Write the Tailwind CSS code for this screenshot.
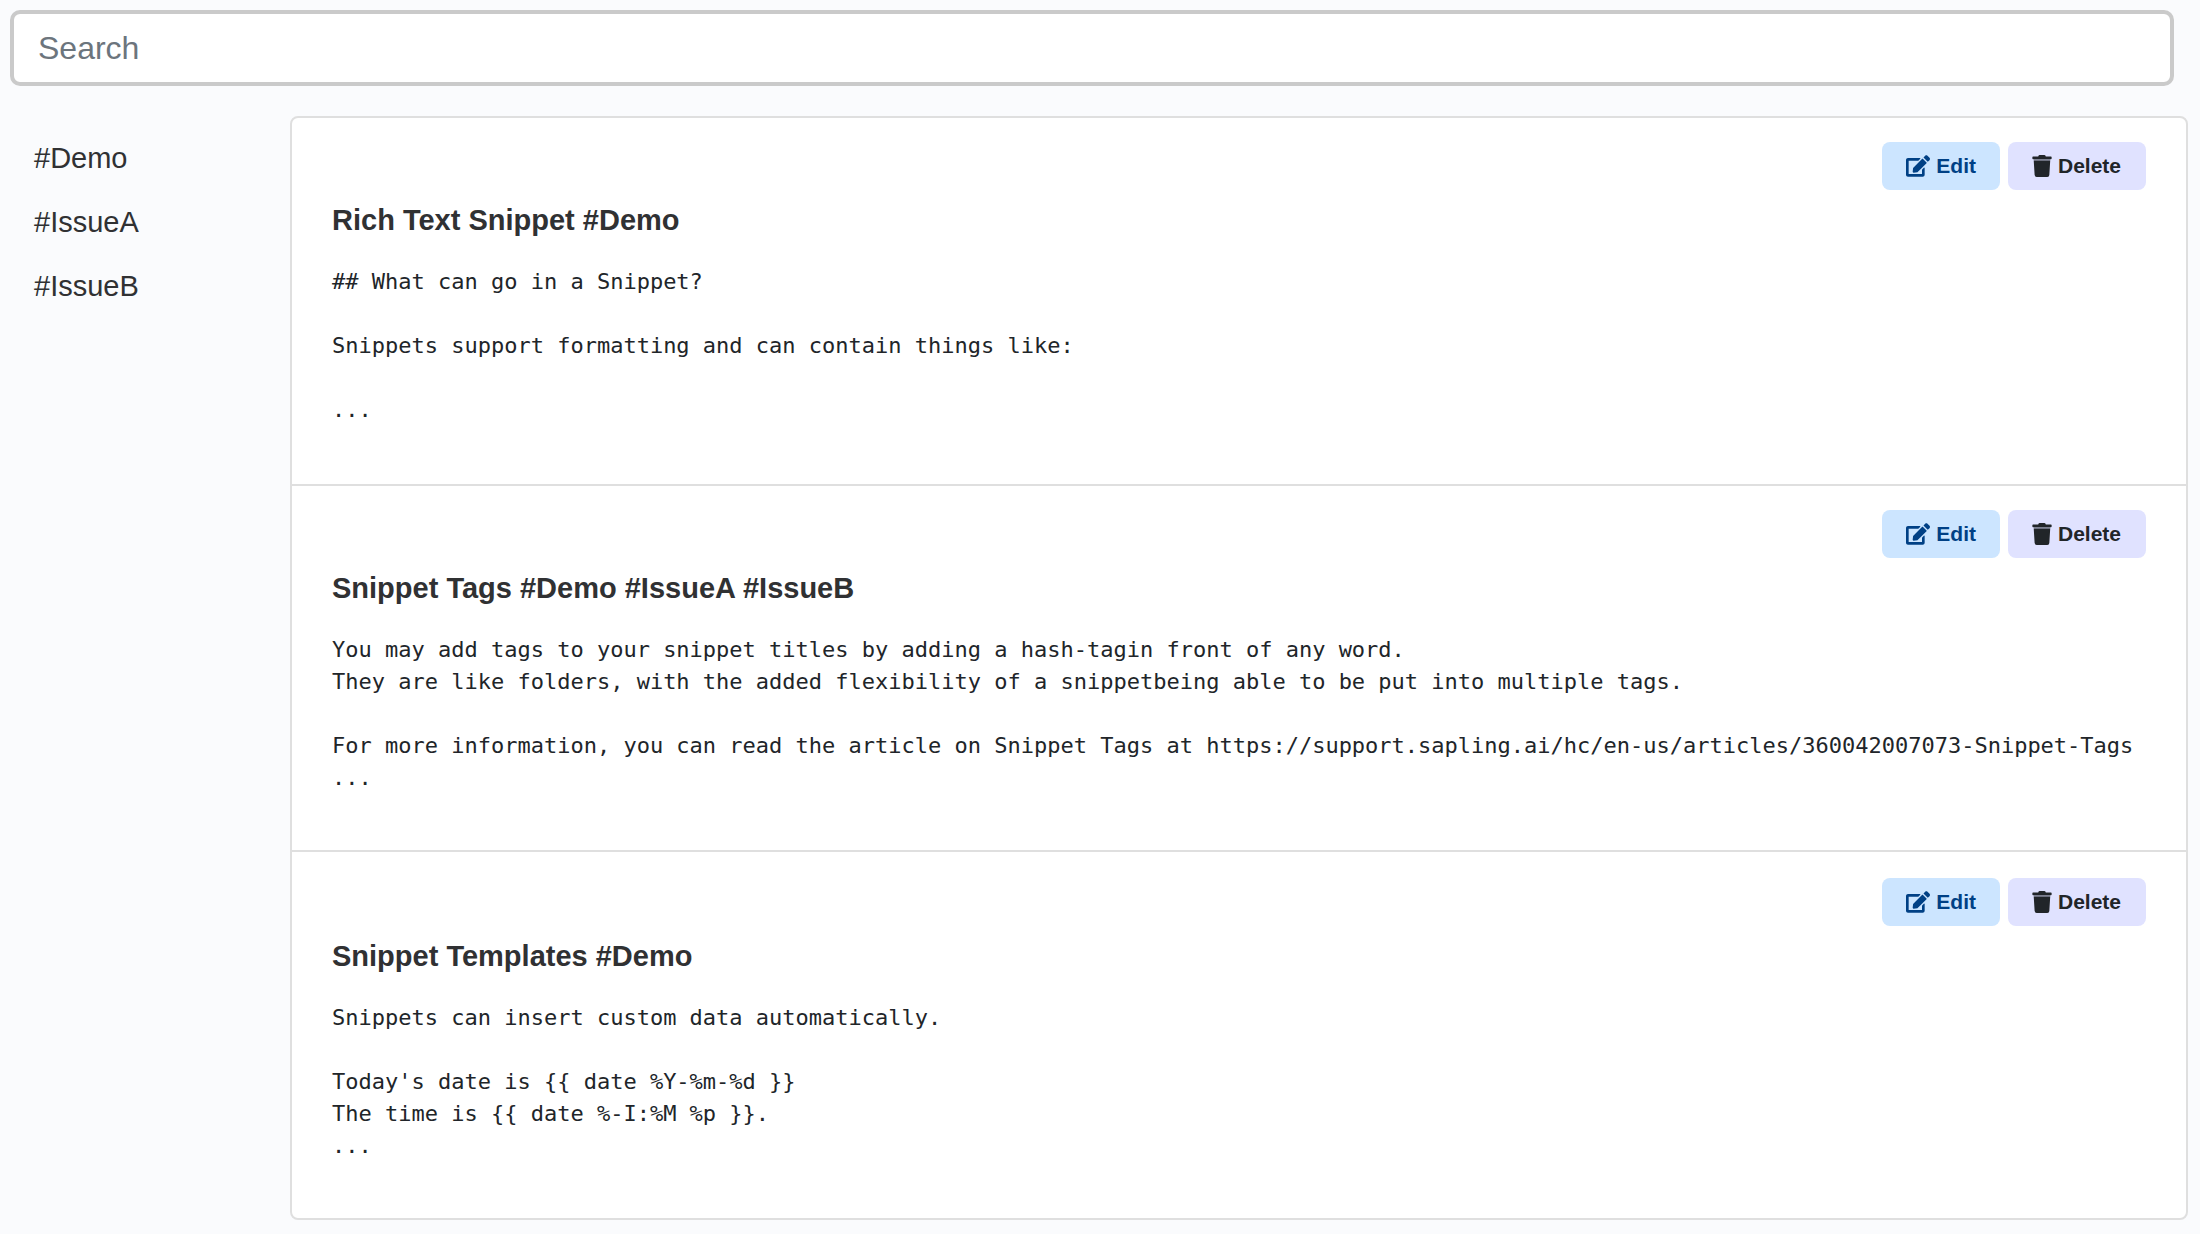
<!DOCTYPE html>
<html lang="en">
<head>
<meta charset="utf-8">
<title>Snippets</title>
<script src="https://cdn.jsdelivr.net/npm/@tailwindcss/browser@4"></script>
</head>
<body class="min-h-screen bg-[#fafbfd] pt-[10px] pl-[10px] font-['Liberation_Sans',Arial,sans-serif] text-[#212529]">
<svg class="hidden" aria-hidden="true">
  <symbol id="icon-edit" viewBox="0 0 576 512"><path d="M402.6 83.2l90.2 90.2c3.8 3.8 3.8 10 0 13.8L274.4 405.6l-92.8 10.3c-12.4 1.4-22.9-9.1-21.5-21.5l10.3-92.8L388.8 83.2c3.8-3.8 10-3.8 13.8 0zm162-22.9l-48.8-48.8c-15.2-15.2-39.9-15.2-55.2 0l-35.4 35.4c-3.8 3.8-3.8 10 0 13.8l90.2 90.2c3.8 3.8 10 3.8 13.8 0l35.4-35.4c15.2-15.3 15.2-40 0-55.2zM384 346.2V448H64V128h229.8c3.2 0 6.2-1.3 8.5-3.5l40-40c7.6-7.6 2.2-20.5-8.5-20.5H48C21.5 64 0 85.5 0 112v352c0 26.5 21.5 48 48 48h352c26.5 0 48-21.5 48-48V306.2c0-10.7-12.9-16-20.5-8.5l-40 40c-2.2 2.3-3.5 5.3-3.5 8.5z"/></symbol>
  <symbol id="icon-trash" viewBox="0 0 448 512"><path d="M432 32H312l-9.4-18.7A24 24 0 0 0 281.1 0H166.8a23.72 23.72 0 0 0-21.4 13.3L136 32H16A16 16 0 0 0 0 48v32a16 16 0 0 0 16 16h416a16 16 0 0 0 16-16V48a16 16 0 0 0-16-16z"/><path fill-opacity=".4" d="M32 96h384v32H32z"/><path d="M53.2 467a48 48 0 0 0 47.9 45h245.8a48 48 0 0 0 47.9-45L416 128H32z"/></symbol>
</svg>
<header class="pr-[26px]">
  <input type="search" aria-label="Search" placeholder="Search" class="block h-[76px] w-full rounded-[10px] border-4 border-[#cacaca] bg-white px-6 text-[32px] placeholder:text-[#6c757d]">
</header>
<div class="mt-[30px] flex pr-3">
  <nav aria-label="Tags" class="flex w-[280px] shrink-0 flex-col pt-[10px] pl-6 text-[29px] leading-8 text-[#303133]">
    <a href="#Demo" class="py-4">#Demo</a>
    <a href="#IssueA" class="py-4">#IssueA</a>
    <a href="#IssueB" class="py-4">#IssueB</a>
  </nav>
  <main class="min-w-0 grow divide-y-2 divide-[#dfdfdf] rounded-lg border-2 border-[#dfdfdf] bg-white">
    <article class="px-10 pt-6 pb-[58px]">
      <div class="flex justify-end gap-2 text-[21px] font-bold">
        <button class="flex h-12 items-center gap-[6px] rounded-lg bg-[#cce5ff] px-6 text-[#004085]"><svg class="h-[22px] w-6" fill="currentColor" aria-hidden="true"><use href="#icon-edit"/></svg>Edit</button>
        <button class="flex h-12 items-center gap-[6px] rounded-lg bg-[#e0e2ff] pr-[25px] pl-6"><svg class="h-[22px] w-5" fill="currentColor" aria-hidden="true"><use href="#icon-trash"/></svg>Delete</button>
      </div>
      <h2 class="mt-3 text-[29px] leading-9 font-bold text-[#303133]">Rich Text Snippet #Demo</h2>
      <pre class="mt-7 font-['DejaVu_Sans_Mono',monospace] text-[22px] leading-8">## What can go in a Snippet?

Snippets support formatting and can contain things like:

...</pre>
    </article>
    <article class="px-10 pt-6 pb-14">
      <div class="flex justify-end gap-2 text-[21px] font-bold">
        <button class="flex h-12 items-center gap-[6px] rounded-lg bg-[#cce5ff] px-6 text-[#004085]"><svg class="h-[22px] w-6" fill="currentColor" aria-hidden="true"><use href="#icon-edit"/></svg>Edit</button>
        <button class="flex h-12 items-center gap-[6px] rounded-lg bg-[#e0e2ff] pr-[25px] pl-6"><svg class="h-[22px] w-5" fill="currentColor" aria-hidden="true"><use href="#icon-trash"/></svg>Delete</button>
      </div>
      <h2 class="mt-3 text-[29px] leading-9 font-bold text-[#303133]">Snippet Tags #Demo #IssueA #IssueB</h2>
      <pre class="mt-7 font-['DejaVu_Sans_Mono',monospace] text-[22px] leading-8">You may add tags to your snippet titles by adding a hash-tagin front of any word.
They are like folders, with the added flexibility of a snippetbeing able to be put into multiple tags.

For more information, you can read the article on Snippet Tags at https://support.sapling.ai/hc/en-us/articles/360042007073-Snippet-Tags
...</pre>
    </article>
    <article class="px-10 pt-[26px] pb-14">
      <div class="flex justify-end gap-2 text-[21px] font-bold">
        <button class="flex h-12 items-center gap-[6px] rounded-lg bg-[#cce5ff] px-6 text-[#004085]"><svg class="h-[22px] w-6" fill="currentColor" aria-hidden="true"><use href="#icon-edit"/></svg>Edit</button>
        <button class="flex h-12 items-center gap-[6px] rounded-lg bg-[#e0e2ff] pr-[25px] pl-6"><svg class="h-[22px] w-5" fill="currentColor" aria-hidden="true"><use href="#icon-trash"/></svg>Delete</button>
      </div>
      <h2 class="mt-3 text-[29px] leading-9 font-bold text-[#303133]">Snippet Templates #Demo</h2>
      <pre class="mt-7 font-['DejaVu_Sans_Mono',monospace] text-[22px] leading-8">Snippets can insert custom data automatically.

Today's date is {{ date %Y-%m-%d }}
The time is {{ date %-I:%M %p }}.
...</pre>
    </article>
  </main>
</div>
</body>
</html>
